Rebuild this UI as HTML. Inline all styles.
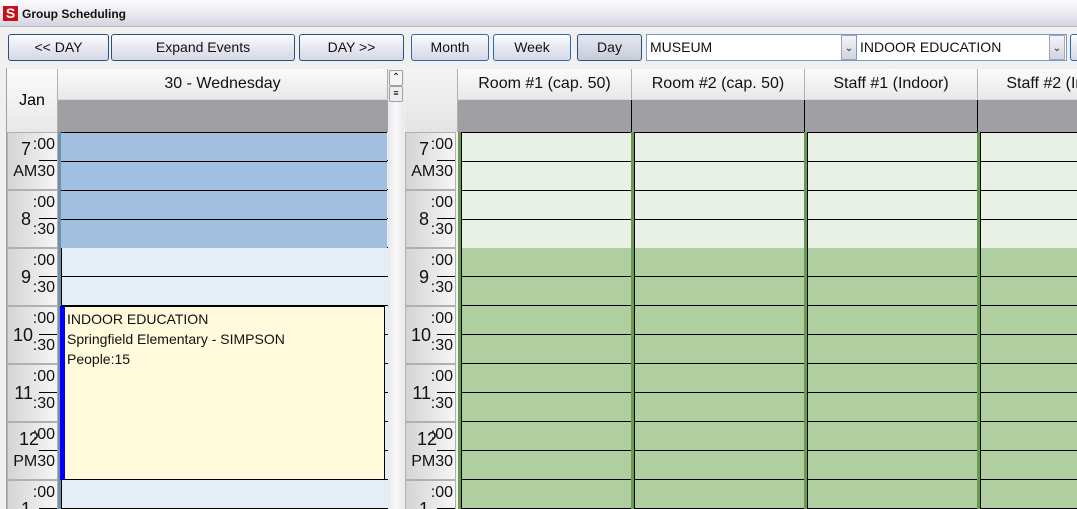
<!DOCTYPE html>
<html style="overflow:hidden;width:1077px;height:509px"><head><meta charset="utf-8"><style>
*{margin:0;padding:0;box-sizing:border-box}
body{width:1077px;height:509px;overflow:hidden;background:#f0f0f0;font-family:"Liberation Sans","DejaVu Sans",sans-serif;position:relative}
.a{position:absolute}
.title{left:0;top:0;width:1077px;height:27px;background:linear-gradient(#fdfdff,#e6e6ee 60%,#d4d4de);border-bottom:1px solid #b8b8c4}
.logo{left:3px;top:6px;width:15px;height:15px;background:#c8101a;color:#fff;font-weight:bold;font-size:14px;line-height:15px;text-align:center}
.tt{left:22px;top:7px;font-size:12px;font-weight:bold;color:#111}
.btn{height:27px;top:34px;border:1px solid #2a4f7a;border-radius:3px;background:linear-gradient(#fdfdff,#e4e6f0 55%,#d6d9e6);font-size:14px;color:#111;text-align:center;line-height:25px}
.dd{top:34px;height:27px;background:#fff;border:1px solid #7a9ac0;font-size:14px;line-height:25px;padding-left:3px;color:#111}
.arr{top:35px;width:16px;height:25px;background:linear-gradient(#f4f4f8,#d0d4de);border:1px solid #a0a8b8;font-size:10px;text-align:center;line-height:25px;color:#222}
.hdr{top:69px;height:30px;background:linear-gradient(#fbfbfb,#e8e8e8);border-right:1px solid #b0b0b0;font-size:16px;text-align:center;line-height:30px;color:#111}
.gray{top:99px;height:33px;background:#a0a0a4;border-top:1px solid #d8d8d8}
.tc{width:51px;height:58px;border:1px solid #b0b0b0;background:linear-gradient(90deg,#d4d4d4,#f6f6f6);font-size:16px;color:#111;overflow:hidden}
.tc .h{position:absolute;right:26px;top:18px;font-size:18px}
.tc .u{position:absolute;right:2px;top:3px}
.tc .d{position:absolute;right:2px;top:30px}
.tc .l{position:absolute;left:31px;width:20px;top:27px;height:1px;background:#000}
.col{top:132px;height:377px;border-left:3px solid #6a9a50;box-shadow:inset 1px 0 0 #000}
.rows{background-image:repeating-linear-gradient(to bottom,transparent 0,transparent 28px,#000 28px,#000 29px)}
</style></head><body>
<div class="a title"></div>
<div class="a logo">S</div>
<div class="a tt">Group Scheduling</div>

<div class="a btn" style="left:8px;width:101px">&lt;&lt; DAY</div>
<div class="a btn" style="left:111px;width:184px">Expand Events</div>
<div class="a btn" style="left:299px;width:105px">DAY &gt;&gt;</div>
<div class="a btn" style="left:411px;width:78px;border-color:#2a6ab0">Month</div>
<div class="a btn" style="left:493px;width:78px;border-color:#2a6ab0">Week</div>
<div class="a btn" style="left:577px;width:65px;background:linear-gradient(#e6e8f0,#c8ccd8)">Day</div>
<div class="a dd" style="left:646px;width:212px">MUSEUM</div>
<div class="a arr" style="left:841px">&#8964;</div>
<div class="a dd" style="left:856px;width:211px">INDOOR EDUCATION</div>
<div class="a arr" style="left:1049px">&#8964;</div>
<div class="a btn" style="left:1070px;width:20px;border-color:#2a6ab0"></div>

<div class="a" style="left:6px;top:68px;width:1px;height:441px;background:#a0a0a0"></div>
<div class="a" style="left:7px;top:69px;width:51px;height:63px;background:linear-gradient(#fbfbfb,#e8e8e8);border-right:1px solid #b0b0b0;font-size:16px;text-align:center;line-height:63px">Jan</div>
<div class="a hdr" style="left:58px;width:330px">30 - Wednesday</div>
<div class="a gray" style="left:58px;width:330px"></div>
<div class="a" style="left:388px;top:69px;width:16px;height:440px;background:linear-gradient(90deg,#e8e8ec,#fafafa,#e8e8ec)"></div>
<div class="a" style="left:389px;top:70px;width:14px;height:16px;border:1px solid #a0a0a8;border-radius:2px;background:#f4f4f4;font-size:10px;text-align:center;line-height:14px">&#8963;</div>
<div class="a" style="left:389px;top:86px;width:14px;height:16px;border:1px solid #a0a0a8;border-radius:2px;background:#eee;font-size:9px;text-align:center;line-height:13px">&#8801;</div>

<div class="a rows" style="left:58px;top:132px;width:330px;height:377px;border-left:3px solid #7090b0;box-shadow:inset 1px 0 0 #000;background-color:#e5edf7"></div>
<div class="a rows" style="left:61px;top:132px;width:326px;height:116px;background-color:#a3bfe0;border-top:1px solid #000"></div>
<div class="a" style="left:60px;top:306px;width:325px;height:174px;background:#fffadb;border:1px solid #000;border-left:5px solid #0000ff;font-size:14px;line-height:20px;padding:2px 0 0 2px;color:#111">INDOOR EDUCATION<br>Springfield Elementary - SIMPSON<br>People:15</div>

<div class="a tc" style="left:7px;top:132px"><span class="h" style="top:6px">7</span><span class="u">:00</span><span class="l"></span><span class="d">AM30</span></div>
<div class="a tc" style="left:7px;top:190px"><span class="h">8</span><span class="u">:00</span><span class="l"></span><span class="d">:30</span></div>
<div class="a tc" style="left:7px;top:248px"><span class="h">9</span><span class="u">:00</span><span class="l"></span><span class="d">:30</span></div>
<div class="a tc" style="left:7px;top:306px"><span class="h" style="right:24px">10</span><span class="u">:00</span><span class="l"></span><span class="d">:30</span></div>
<div class="a tc" style="left:7px;top:364px"><span class="h" style="right:24px">11</span><span class="u">:00</span><span class="l"></span><span class="d">:30</span></div>
<div class="a tc" style="left:7px;top:422px"><span class="h" style="top:6px;right:18px">12</span><span class="u">:00</span><span class="l"></span><span class="d">PM30</span></div>
<div class="a tc" style="left:7px;top:480px;height:29px;border-bottom:none"><span class="h">1</span><span class="u">:00</span><span class="l"></span></div>

<div class="a" style="left:405px;top:69px;width:53px;height:63px;background:linear-gradient(#f4f4f4,#e4e4e4);border-right:1px solid #b0b0b0"></div>
<div class="a hdr" style="left:458px;width:174px">Room #1 (cap. 50)</div>
<div class="a hdr" style="left:632px;width:173px">Room #2 (cap. 50)</div>
<div class="a hdr" style="left:805px;width:173px">Staff #1 (Indoor)</div>
<div class="a hdr" style="left:978px;width:173px">Staff #2 (Indoor)</div>
<div class="a gray" style="left:458px;width:619px;background:linear-gradient(90deg,#a0a0a4 173px,#000 173px,#000 174px,#a0a0a4 174px,#a0a0a4 346px,#000 346px,#000 347px,#a0a0a4 347px,#a0a0a4 519px,#000 519px,#000 520px,#a0a0a4 520px)"></div>

<div class="a col rows" style="left:458px;width:174px;background-color:#afcfa0"></div>
<div class="a col rows" style="left:631px;width:174px;background-color:#afcfa0"></div>
<div class="a col rows" style="left:804px;width:174px;background-color:#afcfa0"></div>
<div class="a col rows" style="left:977px;width:100px;background-color:#afcfa0"></div>
<div class="a rows" style="left:462px;top:132px;width:169px;height:116px;background-color:#e9f0e5;border-top:1px solid #000"></div>
<div class="a rows" style="left:635px;top:132px;width:169px;height:116px;background-color:#e9f0e5;border-top:1px solid #000"></div>
<div class="a rows" style="left:808px;top:132px;width:169px;height:116px;background-color:#e9f0e5;border-top:1px solid #000"></div>
<div class="a rows" style="left:981px;top:132px;width:96px;height:116px;background-color:#e9f0e5;border-top:1px solid #000"></div>

<div class="a tc" style="left:405px;top:132px"><span class="h" style="top:6px">7</span><span class="u">:00</span><span class="l"></span><span class="d">AM30</span></div>
<div class="a tc" style="left:405px;top:190px"><span class="h">8</span><span class="u">:00</span><span class="l"></span><span class="d">:30</span></div>
<div class="a tc" style="left:405px;top:248px"><span class="h">9</span><span class="u">:00</span><span class="l"></span><span class="d">:30</span></div>
<div class="a tc" style="left:405px;top:306px"><span class="h" style="right:24px">10</span><span class="u">:00</span><span class="l"></span><span class="d">:30</span></div>
<div class="a tc" style="left:405px;top:364px"><span class="h" style="right:24px">11</span><span class="u">:00</span><span class="l"></span><span class="d">:30</span></div>
<div class="a tc" style="left:405px;top:422px"><span class="h" style="top:6px;right:18px">12</span><span class="u">:00</span><span class="l"></span><span class="d">PM30</span></div>
<div class="a tc" style="left:405px;top:480px;height:29px;border-bottom:none"><span class="h">1</span><span class="u">:00</span><span class="l"></span></div>
</body></html>
